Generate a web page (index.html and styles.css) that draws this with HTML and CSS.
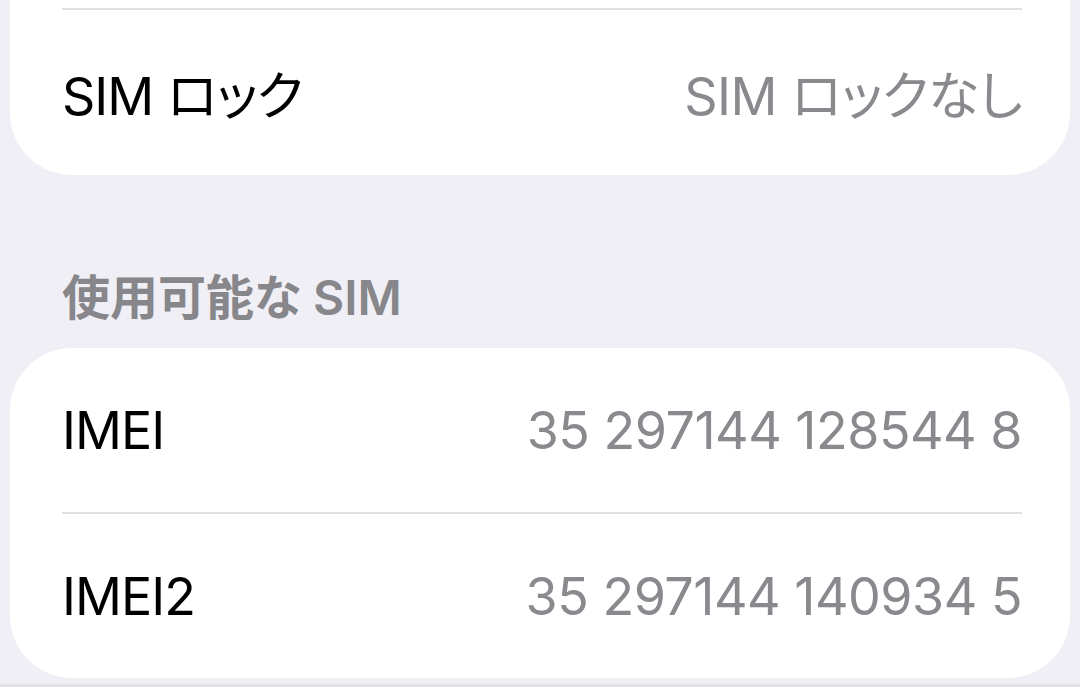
FILE: index.html
```html
<!DOCTYPE html>
<html lang="ja">
<head>
    <meta charset="UTF-8">
    <meta name="viewport" content="width=device-width, initial-scale=1.0">
    <title>情報</title>
    <link rel="stylesheet" href="styles.css">
</head>
<body>
    <div class="page">
        <div class="card card-cut">
            <div class="row">
                <span class="label">SIM ロック</span>
                <span class="value">SIM ロックなし</span>
            </div>
        </div>

        <h2 class="section-title">使用可能な SIM</h2>

        <div class="card">
            <div class="row">
                <span class="label">IMEI</span>
                <span class="value">35 297144 128544 8</span>
            </div>
            <div class="row">
                <span class="label">IMEI2</span>
                <span class="value">35 297144 140934 5</span>
            </div>
        </div>
    </div>
    <div class="bottom-edge"></div>
</body>
</html>
```

FILE: styles.css
```css
html, body {
    margin: 0;
    height: 100%;
}

body {
    font-family: Inter, "Noto Sans CJK JP", sans-serif;
    font-feature-settings: "palt";
    background-color: #f0eff5;
    color: #000000;
    overflow: hidden;
    display: flex;
    flex-direction: column;
}

.page {
    flex: 1;
    padding: 0 10px;
}

.card {
    background-color: #ffffff;
    border-radius: 62px;
    padding: 0 48px 0 52px;
}

.card-cut {
    border-top-left-radius: 0;
    border-top-right-radius: 0;
    padding-top: 8px;
}

.row {
    display: flex;
    justify-content: space-between;
    align-items: center;
    height: 164px;
    font-size: 52px;
}

.row + .row,
.card-cut .row {
    border-top: 2px solid #e0e0e4;
}

.card-cut .row {
    height: 165px;
}

.label {
    letter-spacing: -1px;
}

.value {
    color: #8a8a8e;
    letter-spacing: -0.5px;
}

.section-title {
    margin: 0;
    height: 173px;
    display: flex;
    align-items: center;
    padding: 84px 0 20px 52px;
    box-sizing: border-box;
    font-size: 48px;
    font-weight: 600;
    color: #86868b;
}

.bottom-edge {
    height: 3px;
    background-color: #e2e2e7;
}
```
